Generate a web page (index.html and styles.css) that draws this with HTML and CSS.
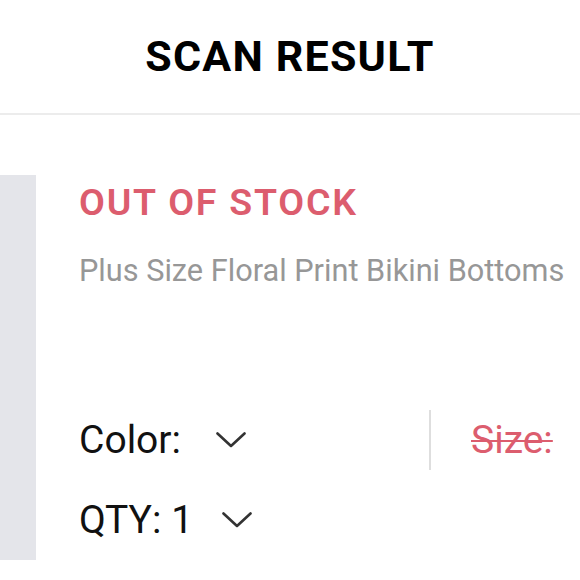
FILE: index.html
```html
<!DOCTYPE html>
<html lang="en">
<head>
<meta charset="utf-8">
<title>Scan Result</title>
<link rel="stylesheet" href="styles.css">
</head>
<body>
<header class="topbar">
  <h1 class="topbar-title">SCAN RESULT</h1>
</header>
<main class="product">
  <div class="product-thumb"></div>
  <section class="product-info">
    <div class="stock-status">OUT OF STOCK</div>
    <div class="product-name">Plus Size Floral Print Bikini Bottoms</div>
    <div class="option-row">
      <div class="option-left">
        <span class="option-label">Color:</span>
        <svg class="chevron chevron-color" width="30" height="16" viewBox="0 0 30 16"><path d="M1.5 1.5 L15 14 L28.5 1.5" fill="none" stroke="#333" stroke-width="2.6" stroke-linecap="round" stroke-linejoin="round"/></svg>
      </div>
      <div class="option-divider"></div>
      <div class="option-right">
        <span class="option-label option-disabled">Size:</span>
      </div>
    </div>
    <div class="option-row qty-row">
      <span class="option-label">QTY: 1</span>
      <svg class="chevron chevron-qty" width="30" height="16" viewBox="0 0 30 16"><path d="M1.5 1.5 L15 14 L28.5 1.5" fill="none" stroke="#333" stroke-width="2.6" stroke-linecap="round" stroke-linejoin="round"/></svg>
    </div>
  </section>
</main>
</body>
</html>
```

FILE: styles.css
```css
* { box-sizing: border-box; }
html, body {
  margin: 0;
  padding: 0;
  background: #ffffff;
  font-family: Roboto, "Liberation Sans", Arial, sans-serif;
  overflow: hidden;
}
.topbar {
  height: 115px;
  border-bottom: 2px solid #ececec;
  display: flex;
  align-items: center;
  justify-content: center;
}
.topbar-title {
  margin: 0;
  font-size: 43px;
  font-weight: 700;
  letter-spacing: 1.2px;
  color: #000;
  line-height: 50px;
  padding-bottom: 1px;
}
.product {
  display: flex;
  padding-top: 60px;
}
.product-thumb {
  width: 36px;
  height: 385px;
  background: #e4e5ea;
  flex: none;
}
.product-info {
  margin-left: 43px;
  padding-top: 5px;
  flex: 1;
  min-width: 0;
}
.stock-status {
  font-size: 37.5px;
  line-height: 44px;
  font-weight: 600;
  letter-spacing: 1.8px;
  color: #dc5d6e;
  white-space: nowrap;
}
.product-name {
  margin-top: 29px;
  font-size: 30.7px;
  line-height: 36px;
  color: #979797;
  white-space: nowrap;
}
.option-row {
  display: flex;
  align-items: center;
  margin-top: 128px;
  height: 46px;
}
.option-left {
  display: flex;
  align-items: center;
  width: 350px;
  flex: none;
}
.option-label {
  font-size: 39px;
  line-height: 46px;
  color: #111;
  white-space: nowrap;
}
.chevron-color { margin-left: 35px; }
.option-divider {
  width: 2px;
  height: 60px;
  background: #dedede;
  flex: none;
}
.option-right {
  padding-left: 40px;
}
.option-disabled {
  color: #dc5d6e;
  text-decoration: line-through;
  text-decoration-thickness: 2px;
}
.qty-row {
  margin-top: 34px;
}
.chevron-qty { margin-left: 29px; }
```
